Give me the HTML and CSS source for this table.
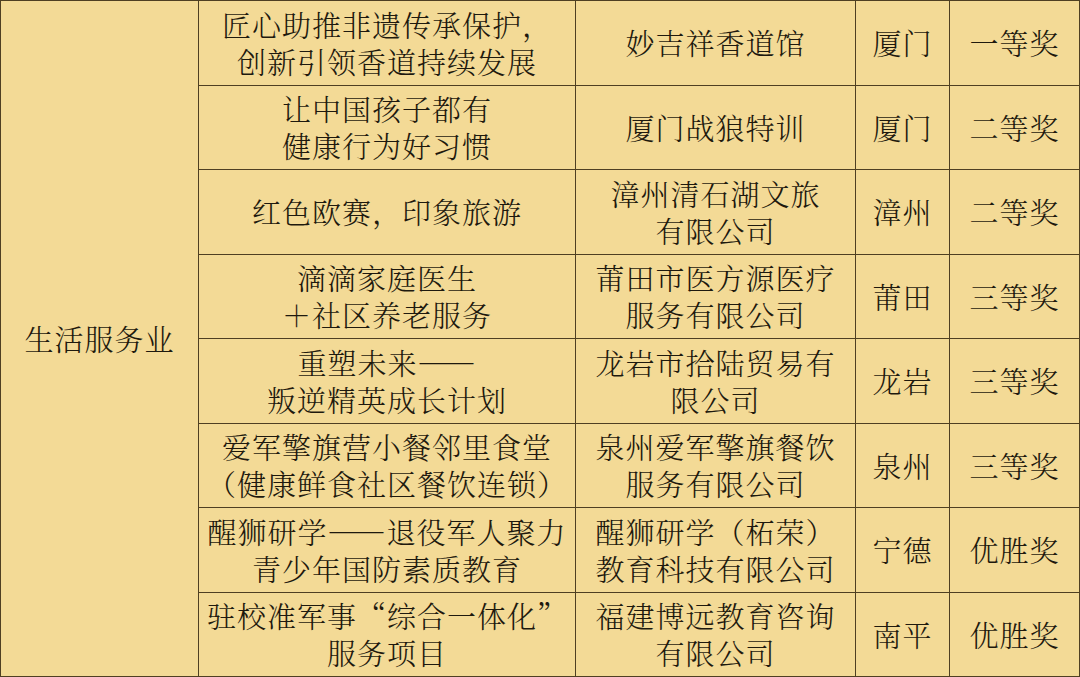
FILE: index.html
```html
<!DOCTYPE html>
<html lang="zh-CN">
<head>
<meta charset="utf-8">
<link rel="stylesheet" href="styles.css">
</head>
<body>
<table class="awards">
  <colgroup>
    <col class="c1"><col class="c2"><col class="c3"><col class="c4"><col class="c5">
  </colgroup>
  <tbody>
    <tr class="r">
      <td rowspan="8" class="cat">生活服务业</td>
      <td>匠心助推非遗传承保护，<br>创新引领香道持续发展</td>
      <td>妙吉祥香道馆</td>
      <td>厦门</td>
      <td>一等奖</td>
    </tr>
    <tr class="r">
      <td>让中国孩子都有<br>健康行为好习惯</td>
      <td>厦门战狼特训</td>
      <td>厦门</td>
      <td>二等奖</td>
    </tr>
    <tr class="r">
      <td>红色欧赛，印象旅游</td>
      <td>漳州清石湖文旅<br>有限公司</td>
      <td>漳州</td>
      <td>二等奖</td>
    </tr>
    <tr class="r">
      <td>滴滴家庭医生<br>＋社区养老服务</td>
      <td>莆田市医方源医疗<br>服务有限公司</td>
      <td>莆田</td>
      <td>三等奖</td>
    </tr>
    <tr class="r">
      <td>重塑未来——<br>叛逆精英成长计划</td>
      <td>龙岩市拾陆贸易有<br>限公司</td>
      <td>龙岩</td>
      <td>三等奖</td>
    </tr>
    <tr class="r">
      <td>爱军擎旗营小餐邻里食堂<br>（健康鲜食社区餐饮连锁）</td>
      <td>泉州爱军擎旗餐饮<br>服务有限公司</td>
      <td>泉州</td>
      <td>三等奖</td>
    </tr>
    <tr class="r">
      <td>醒狮研学——退役军人聚力<br>青少年国防素质教育</td>
      <td>醒狮研学（柘荣）<br>教育科技有限公司</td>
      <td>宁德</td>
      <td>优胜奖</td>
    </tr>
    <tr class="r">
      <td>驻校准军事“综合一体化”<br>服务项目</td>
      <td>福建博远教育咨询<br>有限公司</td>
      <td>南平</td>
      <td>优胜奖</td>
    </tr>
  </tbody>
</table>
</body>
</html>
```
FILE: styles.css
```css
html, body {
  margin: 0;
  padding: 0;
  background: #f3da96;
}
body {
  width: 1080px;
  height: 677px;
  overflow: hidden;
  font-family: "Noto Serif CJK SC", "Noto Sans CJK SC", serif;
  color: #1e190e;
}
.awards {
  border-collapse: collapse;
  table-layout: fixed;
  width: 1079px;
  background: #f3da96;
}
.c1 { width: 198px; }
.c2 { width: 377px; }
.c3 { width: 280px; }
.c4 { width: 94px; }
.c5 { width: 130px; }
.awards td {
  border: 1px solid #4e3f22;
  text-align: center;
  vertical-align: middle;
  padding: 0;
  font-size: 29px;
  font-weight: 300;
  line-height: 37px;
  letter-spacing: 1px;
  white-space: nowrap;
}
.awards .r { height: 84.5px; }
```
